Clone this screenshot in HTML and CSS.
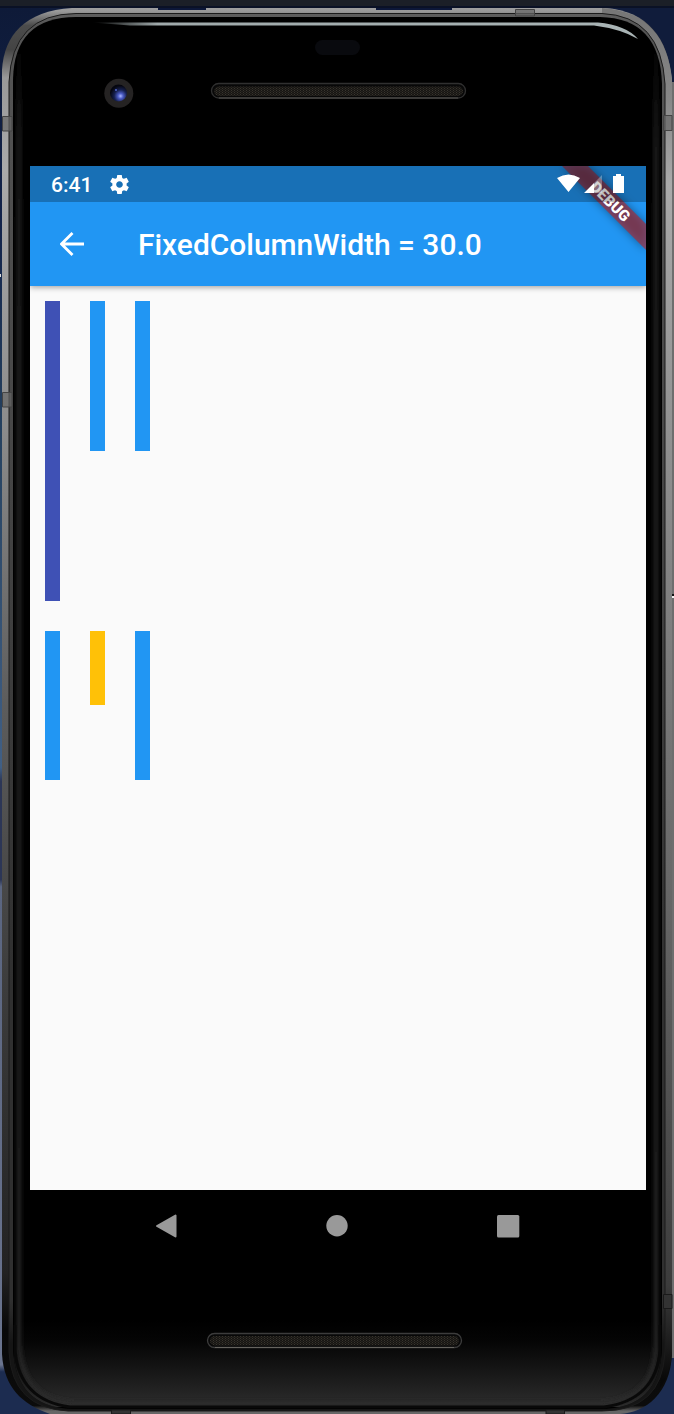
FILE: index.html
```html
<!DOCTYPE html>
<html lang="en">
<head>
<meta charset="utf-8">
<title>FixedColumnWidth</title>
<link rel="stylesheet" href="styles.css">
</head>
<body>
<div class="phone">
  <svg class="casing" viewBox="0 0 674 1414" aria-hidden="true">
    <defs>
      <linearGradient id="metal" gradientUnits="userSpaceOnUse" x1="0" y1="0" x2="0" y2="1414">
        <stop offset="0" stop-color="#aaa"/><stop offset=".008" stop-color="#999"/><stop offset=".018" stop-color="#4c4c4c"/><stop offset=".035" stop-color="#444"/><stop offset=".055" stop-color="#999"/><stop offset=".12" stop-color="#aaa"/>
        <stop offset=".3" stop-color="#8c8c8c"/><stop offset=".5" stop-color="#5c5c5c"/>
        <stop offset=".7" stop-color="#3c3c3c"/><stop offset=".9" stop-color="#222"/><stop offset=".94" stop-color="#080808"/><stop offset=".994" stop-color="#0c0c0c"/><stop offset=".998" stop-color="#666"/><stop offset="1" stop-color="#666"/>
      </linearGradient>
      <linearGradient id="metalRight" gradientUnits="userSpaceOnUse" x1="0" y1="20" x2="0" y2="1380">
        <stop offset="0" stop-color="#777"/><stop offset=".06" stop-color="#888"/><stop offset=".12" stop-color="#aaa"/><stop offset=".4" stop-color="#848484"/>
        <stop offset=".65" stop-color="#666"/><stop offset=".93" stop-color="#3c3c3c"/><stop offset="1" stop-color="#080808"/>
      </linearGradient>
      <linearGradient id="innerEdge" gradientUnits="userSpaceOnUse" x1="0" y1="0" x2="0" y2="1414">
        <stop offset="0" stop-color="#6a6a6a"/><stop offset=".018" stop-color="#555"/><stop offset=".3" stop-color="#484848"/><stop offset=".7" stop-color="#303030"/><stop offset=".92" stop-color="#303030"/><stop offset=".95" stop-color="#151515"/><stop offset="1" stop-color="#151515"/>
      </linearGradient>
      <linearGradient id="left" gradientUnits="userSpaceOnUse" x1="0" y1="8" x2="0" y2="1414">
        <stop offset="0" stop-color="#0e1a38"/><stop offset=".15" stop-color="#12234a"/><stop offset=".3" stop-color="#25415f"/><stop offset=".54" stop-color="#405f85"/>
        <stop offset=".55" stop-color="#2c3656"/><stop offset=".62" stop-color="#2c3656"/><stop offset=".625" stop-color="#5a6580"/>
        <stop offset=".965" stop-color="#6a748e"/><stop offset=".97" stop-color="#1c2c50"/><stop offset="1" stop-color="#1c2c50"/>
      </linearGradient>
      <linearGradient id="chin" x1="0" y1="0" x2="0" y2="1">
        <stop offset="0" stop-color="#000"/><stop offset=".25" stop-color="#050505"/><stop offset=".5" stop-color="#121212"/><stop offset=".8" stop-color="#222"/><stop offset="1" stop-color="#2d2d2d"/>
      </linearGradient>
      <linearGradient id="glow" gradientUnits="userSpaceOnUse" x1="0" y1="40" x2="0" y2="1414">
        <stop offset="0" stop-color="#242424" stop-opacity="0"/><stop offset=".08" stop-color="#242424"/><stop offset="1" stop-color="#2a2a2a"/>
      </linearGradient>
      <linearGradient id="shine">
        <stop offset="0" stop-color="#9fa9aa" stop-opacity="0"/><stop offset=".12" stop-color="#9fa9aa"/><stop offset="1" stop-color="#a9b4b5"/>
      </linearGradient>
      <radialGradient id="lens" cx=".62" cy=".68" r=".62">
        <stop offset="0" stop-color="#aab6ff"/><stop offset=".25" stop-color="#4b5bc4"/><stop offset=".6" stop-color="#16204f"/><stop offset="1" stop-color="#05060f"/>
      </radialGradient>
      <pattern id="mesh" width="3" height="2" patternUnits="userSpaceOnUse">
        <rect width="3" height="2" fill="#171613"/><rect width="1" height="1" fill="#38342d"/><rect x="1.5" y="1" width="1" height="1" fill="#302c27"/>
      </pattern>
      <filter id="soft" x="-5%" y="-5%" width="110%" height="110%"><feGaussianBlur stdDeviation="2"/></filter>
      <clipPath id="glass"><path d="M13 80Q14 17 76 17H600Q660 18 662 84V1348Q660 1409 600 1409H72Q15 1407 13 1348Z"/></clipPath>
    </defs>
    <rect width="674" height="1414" fill="#101c3b"/>
    <rect y="8" width="50" height="1406" fill="url(#left)"/>
    <rect x="610" y="1340" width="64" height="74" fill="#1c2c50"/>
    <rect x="668" y="82" width="6" height="1276" fill="#6e6e6e"/>
    <rect x="672" y="594" width="2" height="2" fill="#111"/><rect x="672" y="596" width="2" height="2" fill="#eee"/>
    <rect y="274" width="1" height="3" fill="#ddd"/>
    <rect width="674" height="6" fill="#1b1f27"/><rect y="6" width="674" height="2" fill="#0a1125"/>
    <path d="M2 70C4 35 25 11 72 8H605C648 11 668 38 672 80V1354C670 1394 646 1412 620 1414H50C22 1404 4 1388 2 1354Z" fill="url(#metal)"/>
    <path d="M602 8C648 11 668 38 672 80V1354Q670 1376 660 1388L662 1340V84Q660 18 602 14Z" fill="url(#metalRight)"/>
    <path d="M158 8H206V10H158ZM376 8H452V10H376Z" fill="#0c1738"/>
    <path d="M9 82Q12 14 76 13.500H602Q661 16 665 84V1352Q662 1411 602 1411H68Q12 1408 9 1352Z" fill="url(#innerEdge)" stroke="#1b1b1b"/>
    <path d="M13 80Q14 17 76 17H600Q660 18 662 84V1348Q660 1409 600 1409H72Q15 1407 13 1348Z" fill="#000"/>
    <g clip-path="url(#glass)">
      <rect x="14" y="1320" width="647" height="87" fill="url(#chin)"/>
      <path d="M19 50V1345Q22 1400 74 1403H601Q655 1400 656 1345V50" fill="none" stroke="url(#glow)" stroke-width="4" filter="url(#soft)"/>
      <path d="M15 1325V1350Q19 1400 70 1407H604Q656 1400 660 1350V1325" fill="none" stroke="#090909" stroke-width="3"/>
    </g>
    <path d="M92 22.500H598Q626 25 638 39Q621 29 594 25.500H130Z" fill="url(#shine)"/>
    <path d="M2.500 116.500H12V131H2.500ZM2.500 392.500H12V407H2.500ZM663.500 115.500H672V130.500H663.500ZM515.500 9.500H534.500V16H515.500Z" fill="#666" fill-opacity=".7" stroke="#444"/>
    <path d="M663.500 1294.500H672V1308.500H663.500ZM111.500 1410H130.500V1414H111.500ZM546 1410H564.500V1414H546Z" fill="#333" stroke="#1a1a1a"/>
    <rect x="315" y="40" width="45" height="15" rx="7.5" fill="#090a0e"/>
    <circle cx="118.800" cy="93.300" r="14.500" fill="#252323"/><circle cx="118.500" cy="93" r="8.500" fill="url(#lens)"/><circle cx="116" cy="90" r="1" fill="#5367cc"/>
    <rect x="211.500" y="83.500" width="254" height="14.500" rx="7.250" fill="#080808" stroke="#303030" stroke-width="1.300"/>
    <rect x="214" y="86.500" width="249" height="9.500" rx="4.750" fill="url(#mesh)"/><path d="M219 98H458" stroke="#55534f"/>
    <rect x="207.500" y="1333.500" width="254" height="14" rx="7" fill="#080808" stroke="#3c3c3c" stroke-width="1.300"/>
    <rect x="210" y="1336" width="249" height="9.500" rx="4.750" fill="url(#mesh)"/><path d="M215 1347.500H454" stroke="#66645f"/>
  </svg>

  <main class="screen">
    <header class="app-header">
      <svg class="banner" viewBox="0 0 120 120" aria-hidden="true">
        <defs><filter id="bannerShadow" x="-20%" y="-20%" width="140%" height="140%"><feGaussianBlur stdDeviation="5"/></filter></defs>
        <path d="M36 0H62L120 58V84Z" fill="#000" fill-opacity=".4" filter="url(#bannerShadow)"/>
        <path d="M36 0H62L120 58V84Z" fill="#b52226" fill-opacity=".6"/>
        <text class="banner-text" transform="translate(84.500 35.500) rotate(45)" text-anchor="middle" y="5.500">DEBUG</text>
      </svg>
      <div class="status">
        <span class="clock">6:41</span>
        <svg class="gear" viewBox="2 2 20 20"><path fill="#fff" d="M19.430 12.980c.04-.32.07-.64.07-.98s-.03-.66-.07-.98l2.110-1.650c.19-.15.24-.42.12-.64l-2-3.460c-.12-.22-.39-.3-.61-.22l-2.490 1c-.52-.4-1.080-.73-1.690-.98l-.38-2.650C14.460 2.180 14.250 2 14 2h-4c-.25 0-.46.18-.49.42l-.38 2.650c-.61.25-1.170.59-1.690.98l-2.490-1c-.23-.09-.49 0-.61.22l-2 3.460c-.13.22-.07.49.12.64l2.110 1.650c-.04.32-.07.65-.07.98s.03.66.07.98l-2.110 1.650c-.19.15-.24.42-.12.64l2 3.460c.12.22.39.3.61.22l2.490-1c.52.4 1.080.73 1.690.98l.38 2.650c.03.24.24.42.49.42h4c.25 0 .46-.18.49-.42l.38-2.650c.61-.25 1.170-.59 1.690-.98l2.490 1c.23.09.49 0 .61-.22l2-3.460c.12-.22.07-.49-.12-.64l-2.110-1.650zM12 15.500c-1.930 0-3.500-1.570-3.500-3.500s1.570-3.500 3.500-3.500 3.500 1.570 3.500 3.500-1.570 3.500-3.500 3.500z"/></svg>
        <svg class="signals" viewBox="0 0 68 20"><path fill="#fff" d="M0 4Q11.500-3 23 4L11.500 18ZM27 19L37 9V19ZM56 2H59V0H64V2H67V19H56Z"/><path fill="#fff" fill-opacity=".3" d="M37 9L45 1V19H37Z"/></svg>
      </div>
      <div class="toolbar">
        <svg class="back" viewBox="0 0 24 24"><path d="M24 12H1.500M12.500 1L1.500 12L12.500 23" fill="none" stroke="#fff" stroke-width="2.800"/></svg>
        <h1 class="title">FixedColumnWidth = 30.0</h1>
      </div>
    </header>
    <section class="table">
      <div class="bar bar-tall"></div><div class="bar"></div><div class="bar"></div>
      <div class="bar"></div><div class="bar bar-short"></div><div class="bar"></div>
    </section>
  </main>
  <nav class="nav">
    <svg class="nav-icon" viewBox="0 0 24 24"><path d="M3 12L21.500 1.500V22.500Z" fill="#999" stroke="#999" stroke-width="2" stroke-linejoin="round"/></svg>
    <svg class="nav-icon" viewBox="0 0 24 24"><circle cx="12" cy="11.800" r="10.700" fill="#999"/></svg>
    <svg class="nav-icon" viewBox="0 0 24 24"><rect x="1" y="1" width="22.300" height="22.500" rx="1.500" fill="#999"/></svg>
  </nav>
</div>
</body>
</html>
```
FILE: styles.css
```css
* { box-sizing: border-box; }
body { margin: 0; background: #101c3b; font-family: Roboto, "Liberation Sans", sans-serif; }
svg { display: block; flex: none; }
.phone { position: relative; width: 674px; height: 1414px; padding: 166px 28px 0 30px; overflow: hidden; }
.casing { position: absolute; inset: 0; width: 674px; height: 1414px; }
.screen { position: relative; display: flex; flex-direction: column; height: 1024px; background: #fafafa; overflow: hidden; }
.app-header { position: relative; height: 120px; background: #2196f3; box-shadow: 0 1px 6px rgba(0, 0, 0, .4); color: #fff; }
.banner { position: absolute; top: 0; right: 0; width: 120px; height: 120px; }
.banner-text { font-size: 15.3px; font-weight: 900; fill: #fff; }
.status { position: relative; display: flex; align-items: center; height: 36px; padding: 0 21px; background: rgba(0, 0, 0, .25); }
.clock { width: 59px; font-size: 21px; font-weight: 500; line-height: 36px; padding-top: 1px; }
.gear { width: 19px; height: 19px; }
.signals { width: 68px; height: 20px; margin-left: auto; }
.toolbar { display: flex; align-items: center; height: 84px; padding-left: 30px; }
.back { width: 24px; height: 24px; }
.title { margin: 2px 0 0 54px; font-size: 29.93px; font-weight: 500; line-height: 36px; white-space: nowrap; }
.table { display: grid; grid-template-columns: repeat(3, 15px); grid-template-rows: 299.500px 149.500px; column-gap: 30px; row-gap: 30px; padding: 15px; }
.bar { height: 149.500px; background: #2196f3; }
.bar-tall { height: 299.500px; background: #3f51b5; }
.bar-short { height: 74.500px; background: #ffc107; }
.nav { position: relative; display: flex; justify-content: space-between; padding: 24px 126.500px 0 123.500px; }
.nav-icon { width: 24px; height: 24px; }
```
